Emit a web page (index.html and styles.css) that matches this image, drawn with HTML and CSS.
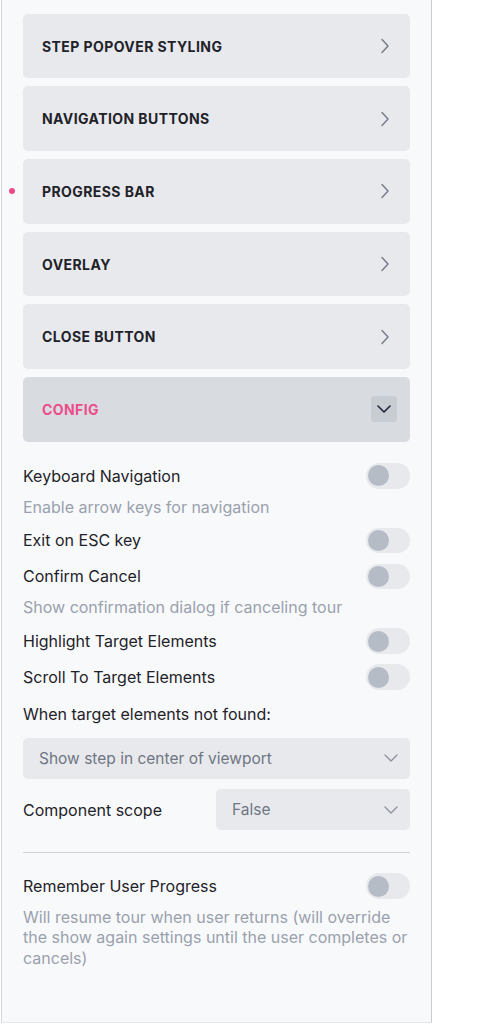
FILE: index.html
```html
<!DOCTYPE html>
<html>
<head>
<meta charset="utf-8">
<link rel="stylesheet" href="styles.css">
</head>
<body>
<div class="panel">
  <div class="sections">
    <div class="section">
      <span class="section-title">Step popover styling</span>
      <svg class="chev-right" width="10" height="16" viewBox="0 0 10 16"><path d="M2 1.5 L8 8 L2 14.5" fill="none" stroke="#737a86" stroke-width="1.4" stroke-linecap="round" stroke-linejoin="round"/></svg>
    </div>
    <div class="section">
      <span class="section-title">Navigation buttons</span>
      <svg class="chev-right" width="10" height="16" viewBox="0 0 10 16"><path d="M2 1.5 L8 8 L2 14.5" fill="none" stroke="#737a86" stroke-width="1.4" stroke-linecap="round" stroke-linejoin="round"/></svg>
    </div>
    <div class="section">
      <span class="dot"></span>
      <span class="section-title">Progress bar</span>
      <svg class="chev-right" width="10" height="16" viewBox="0 0 10 16"><path d="M2 1.5 L8 8 L2 14.5" fill="none" stroke="#737a86" stroke-width="1.4" stroke-linecap="round" stroke-linejoin="round"/></svg>
    </div>
    <div class="section">
      <span class="section-title">Overlay</span>
      <svg class="chev-right" width="10" height="16" viewBox="0 0 10 16"><path d="M2 1.5 L8 8 L2 14.5" fill="none" stroke="#737a86" stroke-width="1.4" stroke-linecap="round" stroke-linejoin="round"/></svg>
    </div>
    <div class="section">
      <span class="section-title">Close button</span>
      <svg class="chev-right" width="10" height="16" viewBox="0 0 10 16"><path d="M2 1.5 L8 8 L2 14.5" fill="none" stroke="#737a86" stroke-width="1.4" stroke-linecap="round" stroke-linejoin="round"/></svg>
    </div>
    <div class="section section-open">
      <span class="section-title title-pink">Config</span>
      <span class="toggle-box">
        <svg width="14" height="8" viewBox="0 0 14 8"><path d="M1 1 L7 7 L13 1" fill="none" stroke="#1f2937" stroke-width="1.6" stroke-linecap="round" stroke-linejoin="round"/></svg>
      </span>
    </div>
  </div>

  <div class="config">
    <div class="group">
      <div class="row"><span class="label">Keyboard Navigation</span><span class="switch"><span class="knob"></span></span></div>
      <div class="desc">Enable arrow keys for navigation</div>
    </div>
    <div class="group">
      <div class="row"><span class="label">Exit on ESC key</span><span class="switch"><span class="knob"></span></span></div>
    </div>
    <div class="group">
      <div class="row"><span class="label">Confirm Cancel</span><span class="switch"><span class="knob"></span></span></div>
      <div class="desc">Show confirmation dialog if canceling tour</div>
    </div>
    <div class="group">
      <div class="row"><span class="label">Highlight Target Elements</span><span class="switch"><span class="knob"></span></span></div>
    </div>
    <div class="group">
      <div class="row"><span class="label">Scroll To Target Elements</span><span class="switch"><span class="knob"></span></span></div>
    </div>
    <div class="field-label">When target elements not found:</div>
    <div class="select select-full">
      <span>Show step in center of viewport</span>
      <svg width="14" height="8" viewBox="0 0 14 8"><path d="M1 1 L7 7 L13 1" fill="none" stroke="#8a919c" stroke-width="1.3" stroke-linecap="round" stroke-linejoin="round"/></svg>
    </div>
    <div class="scope-row">
      <span class="label">Component scope</span>
      <div class="select select-half">
        <span>False</span>
        <svg width="14" height="8" viewBox="0 0 14 8"><path d="M1 1 L7 7 L13 1" fill="none" stroke="#8a919c" stroke-width="1.3" stroke-linecap="round" stroke-linejoin="round"/></svg>
      </div>
    </div>
    <div class="divider"></div>
    <div class="group">
      <div class="row"><span class="label">Remember User Progress</span><span class="switch"><span class="knob"></span></span></div>
      <div class="desc">Will resume tour when user returns (will override the show again settings until the user completes or cancels)</div>
    </div>
  </div>
</div>
</body>
</html>
```
FILE: styles.css
```css
html, body {
  margin: 0;
  padding: 0;
  background: #ffffff;
}
body {
  font-family: Inter, "Noto Sans", "Liberation Sans", sans-serif;
  color: #1f2329;
}
.panel {
  margin-left: 1px;
  width: 431px;
  height: 1023px;
  box-sizing: border-box;
  border-left: 1px solid #d3d6db;
  border-right: 1px solid #c9cdd3;
  border-bottom: 1px solid #e4e6e9;
  background: #f8f9fb;
  padding: 13.7px 21px 0 21px;
}
.sections {
  display: flex;
  flex-direction: column;
  gap: 8px;
}
.section {
  position: relative;
  height: 64.7px;
  border-radius: 5px;
  background: #e8e9ed;
  display: flex;
  align-items: center;
  justify-content: space-between;
  padding: 0 20px 0 19px;
  box-sizing: border-box;
}
.section-title {
  font-size: 14px;
  font-weight: 700;
  text-transform: uppercase;
  letter-spacing: 0.03em;
  color: #1f2329;
}
.title-pink {
  color: #ec4d8a;
}
.section-open {
  background: #d8dbe0;
  padding-right: 13px;
}
.toggle-box {
  width: 26px;
  height: 26px;
  border-radius: 4px;
  background: #c8ccd3;
  display: flex;
  align-items: center;
  justify-content: center;
}
.dot {
  position: absolute;
  left: -14px;
  top: 28.5px;
  width: 6px;
  height: 6px;
  border-radius: 50%;
  background: #ec4d8a;
}
.config {
  padding-top: 21.3px;
  display: flex;
  flex-direction: column;
}
.group {
  display: flex;
  flex-direction: column;
  gap: 8px;
  margin-bottom: 10.5px;
}
.row {
  display: flex;
  align-items: center;
  justify-content: space-between;
  height: 25.5px;
}
.label {
  font-size: 16px;
  color: #1f2329;
}
.desc {
  font-size: 16px;
  line-height: 20.6px;
  color: #9aa1ad;
}
.switch {
  width: 44px;
  height: 25.5px;
  border-radius: 13px;
  background: #e8e9ed;
  display: flex;
  align-items: center;
  padding-left: 2px;
  box-sizing: border-box;
}
.knob {
  width: 21px;
  height: 21px;
  border-radius: 50%;
  background: #b5bcc6;
}
.field-label {
  font-size: 16px;
  line-height: 20.6px;
  margin-top: 3.5px;
  color: #1f2329;
}
.select {
  height: 41px;
  border-radius: 5px;
  background: #e8e9ed;
  display: flex;
  align-items: center;
  justify-content: space-between;
  box-sizing: border-box;
  padding: 0 12px 0 16px;
  font-size: 15.5px;
  color: #6f7682;
}
.select-full {
  margin-top: 13.4px;
}
.scope-row {
  margin-top: 10.6px;
  display: flex;
  align-items: center;
  justify-content: space-between;
}
.select-half {
  width: 194px;
  padding-left: 16px;
}
.divider {
  margin-top: 21.6px;
  height: 1px;
  background: #cfd2d7;
  margin-bottom: 20.4px;
}
```
